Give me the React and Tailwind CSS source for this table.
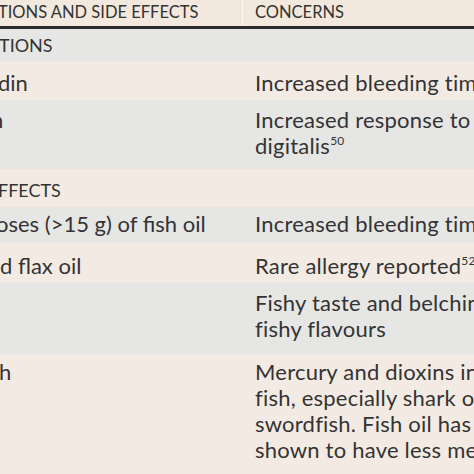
const rows = [
  { kind: "section", bg: "bg-[#e6e6e5]", h: "h-[33px]", pt: "pt-[5px]", left: "TIONS", shift: "-ml-[1px]", right: [] },
  { kind: "body", bg: "bg-[#f3ebe3]", h: "h-[38px]", pt: "pt-[8px]", left: "din", shift: "-ml-[2px]", right: ["Increased bleeding time"] },
  { kind: "body", bg: "bg-[#e6e6e5]", h: "h-[69px]", pt: "pt-[7px]", left: "n", shift: "-ml-[9px]", right: ["Increased response to", ["digitalis", "50"]] },
  { kind: "section", bg: "bg-[#f3ebe3]", h: "h-[38px]", pt: "pt-[10px]", left: "FFECTS", shift: "-ml-[2px]", right: [] },
  { kind: "body", bg: "bg-[#e6e6e5]", h: "h-[36px]", pt: "pt-[4px]", left: "oses (>15 g) of fish oil", shift: "-ml-[4px]", right: ["Increased bleeding time"] },
  { kind: "body", bg: "bg-[#f3ebe3]", h: "h-[40px]", pt: "pt-[10px]", left: "d flax oil", shift: "ml-0", right: [["Rare allergy reported", "52"]] },
  { kind: "body", bg: "bg-[#e6e6e5]", h: "h-[71px]", pt: "pt-[7px]", left: "", shift: "ml-0", right: ["Fishy taste and belching of", "fishy flavours"] },
  {
    kind: "body",
    bg: "bg-[#f3ebe3]",
    h: "h-[130px]",
    pt: "pt-[5px]",
    left: "h",
    shift: "-ml-[1px]",
    right: [
      "Mercury and dioxins in",
      "fish, especially shark or",
      "swordfish. Fish oil has been",
      "shown to have less mercury",
    ],
  },
];

function Line({ line }) {
  if (Array.isArray(line)) {
    return (
      <div>
        {line[0]}
        <sup className="text-[12px] -top-[9px]">{line[1]}</sup>
      </div>
    );
  }
  return <div>{line}</div>;
}

export default function App() {
  return (
    <div
      className="w-[474px] h-[474px] overflow-hidden bg-[#f3ebe3] text-[#333] whitespace-nowrap"
      style={{ fontFamily: 'Lato, "Open Sans", sans-serif' }}
    >
      <div className="flex h-[29px] bg-[#f2e8de] border-b-[3px] border-[#2b2b2b] text-[16.5px] leading-[20px] uppercase">
        <div className="w-[243px] shrink-0 overflow-hidden pt-[2px] border-r border-[#fbf7f2]">
          <div className="-ml-[2px]">TIONS AND SIDE EFFECTS</div>
        </div>
        <div className="pl-[12px] pt-[2px]">CONCERNS</div>
      </div>
      {rows.map((r, i) => (
        <div key={i} className={`flex ${r.bg} ${r.h}`}>
          <div
            className={`w-[243px] shrink-0 overflow-hidden ${r.pt} ${
              r.kind === "section" ? "text-[18px] leading-[22px]" : "text-[22px] leading-[26px]"
            }`}
          >
            <div className={r.shift}>{r.left}</div>
          </div>
          <div className={`pl-[12px] ${r.pt} text-[22px] leading-[26px] tracking-[0.01em]`}>
            {r.right.map((line, j) => (
              <Line key={j} line={line} />
            ))}
          </div>
        </div>
      ))}
    </div>
  );
}
